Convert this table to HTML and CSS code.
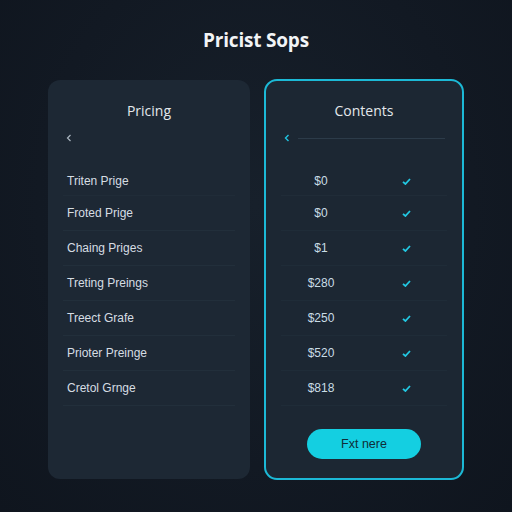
FILE: index.html
```html
<!DOCTYPE html>
<html>
<head>
<meta charset="utf-8">
<link rel="stylesheet" href="styles.css">
</head>
<body>
<main class="page">
  <h1 class="title">Pricist Sops</h1>
  <div class="cards">
    <section class="card">
      <h2 class="card-title">Pricing</h2>
      <div class="nav">
        <svg class="chev" width="6" height="8" viewBox="0 0 6 8"><polyline points="4.5,1 1.5,4 4.5,7" fill="none" stroke="#aab5bf" stroke-width="1.2"/></svg>
      </div>
      <ul class="rows">
        <li class="row">Triten Prige</li>
        <li class="row">Froted Prige</li>
        <li class="row">Chaing Priges</li>
        <li class="row">Treting Preings</li>
        <li class="row">Treect Grafe</li>
        <li class="row">Prioter Preinge</li>
        <li class="row">Cretol Grnge</li>
      </ul>
    </section>
    <section class="card card-active">
      <h2 class="card-title">Contents</h2>
      <div class="nav">
        <svg class="chev" width="6" height="8" viewBox="0 0 6 8"><polyline points="4.5,1 1.5,4 4.5,7" fill="none" stroke="#1fc3df" stroke-width="1.4"/></svg>
        <span class="nav-line"></span>
      </div>
      <ul class="rows">
        <li class="row price-row"><span class="price">$0</span><span class="check"><svg width="9" height="7" viewBox="0 0 9 7"><polyline points="1,3.8 3.4,6 8,1" fill="none" stroke="#22c8e2" stroke-width="1.8"/></svg></span></li>
        <li class="row price-row"><span class="price">$0</span><span class="check"><svg width="9" height="7" viewBox="0 0 9 7"><polyline points="1,3.8 3.4,6 8,1" fill="none" stroke="#22c8e2" stroke-width="1.8"/></svg></span></li>
        <li class="row price-row"><span class="price">$1</span><span class="check"><svg width="9" height="7" viewBox="0 0 9 7"><polyline points="1,3.8 3.4,6 8,1" fill="none" stroke="#22c8e2" stroke-width="1.8"/></svg></span></li>
        <li class="row price-row"><span class="price">$280</span><span class="check"><svg width="9" height="7" viewBox="0 0 9 7"><polyline points="1,3.8 3.4,6 8,1" fill="none" stroke="#22c8e2" stroke-width="1.8"/></svg></span></li>
        <li class="row price-row"><span class="price">$250</span><span class="check"><svg width="9" height="7" viewBox="0 0 9 7"><polyline points="1,3.8 3.4,6 8,1" fill="none" stroke="#22c8e2" stroke-width="1.8"/></svg></span></li>
        <li class="row price-row"><span class="price">$520</span><span class="check"><svg width="9" height="7" viewBox="0 0 9 7"><polyline points="1,3.8 3.4,6 8,1" fill="none" stroke="#22c8e2" stroke-width="1.8"/></svg></span></li>
        <li class="row price-row"><span class="price">$818</span><span class="check"><svg width="9" height="7" viewBox="0 0 9 7"><polyline points="1,3.8 3.4,6 8,1" fill="none" stroke="#22c8e2" stroke-width="1.8"/></svg></span></li>
      </ul>
      <button class="cta">Fxt nere</button>
    </section>
  </div>
</main>
</body>
</html>
```
FILE: styles.css
```css
* { box-sizing: border-box; }
html, body { margin: 0; padding: 0; }
body {
  width: 512px;
  height: 512px;
  background: radial-gradient(ellipse at 50% 40%, #17202b 0%, #121923 60%, #0f151e 100%);
  font-family: "Liberation Sans", Arial, sans-serif;
  color: #d3dae0;
  overflow: hidden;
}
.page {
  padding-top: 28px;
}
.title {
  margin: 0;
  text-align: center;
  font-family: "Open Sans", "Liberation Sans", sans-serif;
  font-weight: 700;
  font-size: 19px;
  line-height: 24px;
  color: #f2f4f6;
  letter-spacing: -0.2px;
}
.cards {
  margin-top: 28px;
  display: flex;
  justify-content: center;
  gap: 14px;
}
.card {
  width: 202px;
  height: 399px;
  background: #1d2834;
  border-radius: 12px;
  padding: 21px 15px 21px;
  display: flex;
  flex-direction: column;
}
.card-active {
  width: 200px;
  height: 401px;
  margin-top: -1px;
  background: #1c2733;
  border: 2px solid #1cb9d6;
  border-radius: 13px;
  padding: 20px 15px 19px;
}
.card-title {
  margin: 0;
  text-align: center;
  font-family: "Open Sans", "Liberation Sans", sans-serif;
  font-weight: 400;
  font-size: 14px;
  line-height: 20px;
  color: #e3e8ec;
}
.nav {
  margin-top: 7px;
  height: 20px;
  display: flex;
  align-items: center;
  padding-left: 3px;
  gap: 8px;
}
.chev { display: block; }
.nav-line {
  flex: 1;
  height: 1px;
  background: #2c3b49;
  margin-right: 2px;
}
.rows {
  list-style: none;
  margin: 13px 0 0;
  padding: 0;
}
.row {
  height: 35px;
  display: flex;
  align-items: center;
  padding-left: 4px;
  font-size: 12px;
  color: #d6dde3;
  border-bottom: 1px solid #222f3b;
}
.row:first-child {
  padding-top: 6px;
  border-bottom-color: #202c38;
}
.price-row {
  padding-left: 1px;
  border-bottom-color: #1f2c38;
}
.price {
  flex: 0 0 78px;
  text-align: center;
  color: #c9dde6;
}
.check {
  flex: 0 0 92px;
  display: flex;
  justify-content: center;
}
.check svg { display: block; }
.cta {
  margin: auto auto 0;
  width: 114px;
  height: 30px;
  border: none;
  border-radius: 15px;
  background: #14cfe1;
  color: #0f2d38;
  font-family: "Liberation Sans", Arial, sans-serif;
  font-size: 12.5px;
}
```
